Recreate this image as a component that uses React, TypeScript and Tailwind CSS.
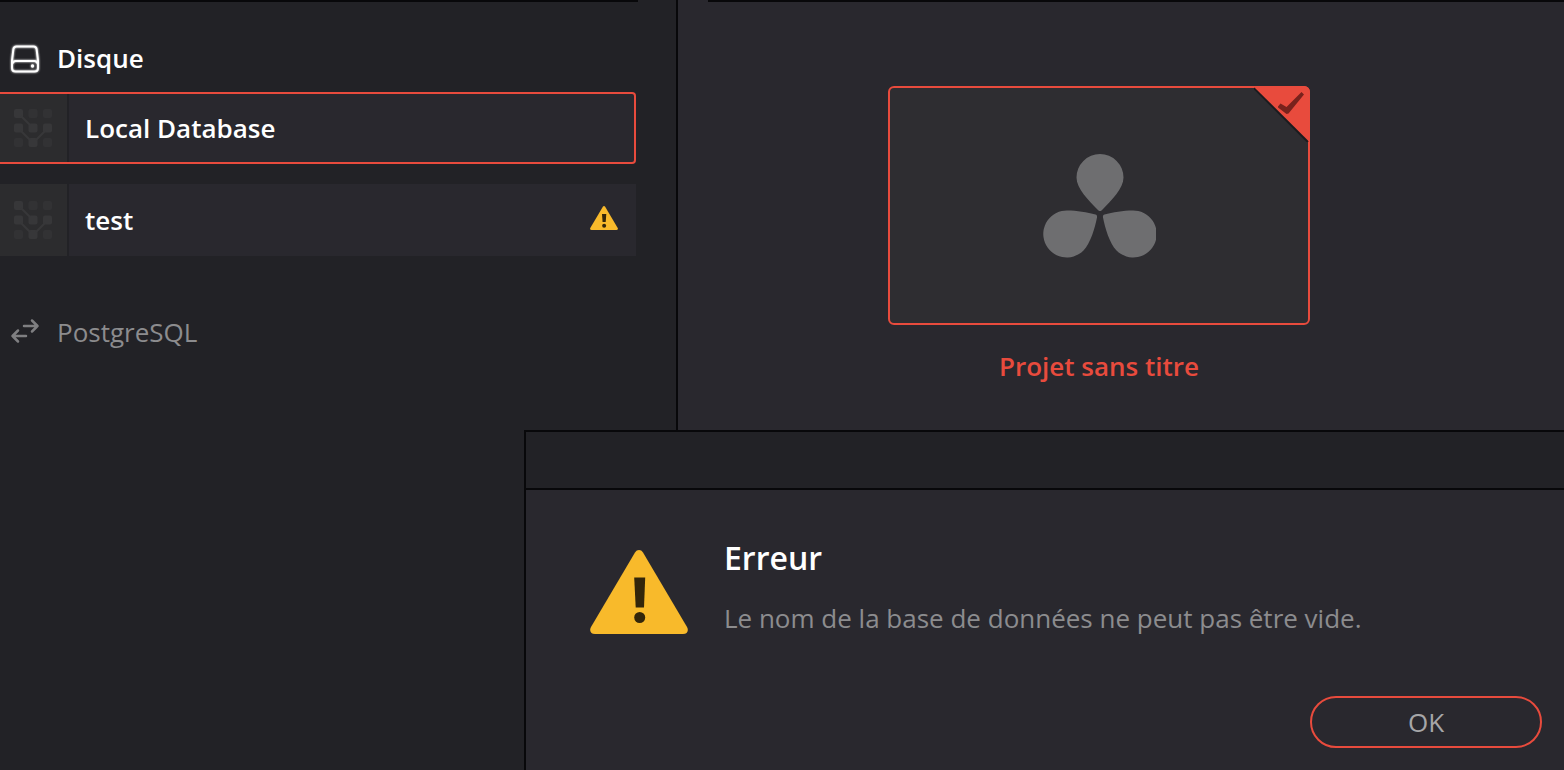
import clsx from "clsx";

const databases = [
  { name: "Local Database", selected: true, warning: false },
  { name: "test", selected: false, warning: true },
];

const DiskIcon: React.FC = () => (
  <svg
    viewBox="0 -2 30 30"
    className="size-[30px] drop-shadow-[0_0_1px_#ffffff]"
    fill="none"
    stroke="#ffffff"
    strokeWidth="2"
    aria-hidden="true"
  >
    <path d="M6.5 1.5h17c1.8 0 2.9 1 3.1 2.7L28 15.5v7.500c0 2-1.500 3.500-3.500 3.500h-19C3.500 26.500 2 25 2 23v-7.500L3.400 4.200C3.600 2.500 4.700 1.500 6.500 1.500z" />
    <path d="M2.500 18.500c.6-1.700 1.500-2.500 3-2.500h19c1.500 0 2.400.8 3 2.500" />
    <circle cx="22.500" cy="21" r="1.700" fill="#ffffff" stroke="none" />
  </svg>
);

const ArrowsIcon: React.FC = () => (
  <svg
    viewBox="0 0 30 28"
    className="w-[30px] h-7"
    fill="none"
    stroke="#7f7f81"
    strokeWidth="2.500"
    strokeLinecap="round"
    strokeLinejoin="round"
    aria-hidden="true"
  >
    <path d="M14 8H27.500M22 2.500l5.500 5.500-5.500 5.500" />
    <path d="M16 18H2.500M8 12.500L2.500 18l5.500 5.500" />
  </svg>
);

const DatabaseIcon: React.FC = () => (
  <svg viewBox="0 0 38 38" className="size-[38px]" aria-hidden="true">
    <g fill="#323234">
      <rect x="14.500" y="0" width="9" height="9" rx="2" />
      <rect x="29" y="0" width="9" height="9" rx="2" />
      <rect x="0" y="29" width="9" height="9" rx="2" />
      <rect x="29" y="29" width="9" height="9" rx="2" />
    </g>
    <g fill="#373739">
      <rect x="0" y="0" width="9" height="9" rx="2" />
      <rect x="0" y="14.500" width="9" height="9" rx="2" />
      <rect x="14.500" y="14.500" width="9" height="9" rx="2" />
      <rect x="29" y="14.500" width="9" height="9" rx="2" />
      <rect x="14.500" y="29" width="9" height="9" rx="2" />
    </g>
    <path
      d="M7 7l9 9M7 22l9 9M31 22l-9 9"
      stroke="#373739"
      strokeWidth="2"
      fill="none"
    />
  </svg>
);

const WarningIcon: React.FC<{ className?: string; bold?: boolean }> = ({
  className,
  bold,
}) => (
  <svg viewBox="0 0 98 84" className={className} aria-hidden="true">
    <path
      d="M45 2.500c2-3.300 6-3.300 8 0l44 74.500c2 3.500.3 7-4 7H5c-4.300 0-6-3.500-4-7z"
      fill="#f8ba2b"
    />
    {bold ? (
      <g fill="#33260a">
        <path d="M42 28h15l-2 28H44z" />
        <circle cx="49.500" cy="69" r="7" />
      </g>
    ) : (
      <g fill="#33260a">
        <path d="M44.200 27.500h11l-1.200 30h-8.300z" />
        <circle cx="49.700" cy="67.500" r="5.500" />
      </g>
    )}
  </svg>
);

const ResolveLogo: React.FC = () => (
  <svg
    viewBox="-1.5 0 114 104"
    className="w-[114px] h-[104px]"
    fill="#6e6e70"
    aria-hidden="true"
  >
    <path d="M56.500 57c-1 0-1.500-.5-2.300-1.300C45.500 46.500 33 35 33 23.500a23.500 23.500 0 0 1 47 0C80 35 67.500 46.500 58.800 55.700 58 56.500 57.500 57 56.500 57z" />
    <path d="M52 60.500c1.300.5 1.800 1.500 1.500 3-2 10-6.500 26-13.500 33A23.500 23.500 0 1 1 24 56.500c9 0 20 1.700 28 4z" />
    <path d="M61 60.500c-1.300.5-1.800 1.500-1.500 3 2 10 6.500 26 13.500 33A23.500 23.500 0 1 0 89 56.500c-9 0-20 1.700-28 4z" />
  </svg>
);

const SelectedCorner: React.FC = () => (
  <svg
    viewBox="0 0 56 56"
    className="absolute -top-0.5 -right-0.5 size-14"
    aria-hidden="true"
  >
    <path d="M0 2l54 54" stroke="#1b1b1e" strokeWidth="2" />
    <path d="M-1 0h51a6 6 0 0 1 6 6v49h-1.500z" fill="#e84b3d" />
    <path
      d="M24 20.500l2.500-3 6 3.500L47.500 6l2.500 2.500L34.500 27.500 32.500 28 24 21.500z"
      fill="#78221c"
    />
  </svg>
);

const Sidebar: React.FC = () => (
  <aside className="w-[678px] shrink-0 border-r-2 border-[#08080a] bg-[#222226]">
    <div className="h-0.5 mr-[38px] bg-[#08080a]" />
    <h2 className="flex items-center gap-[17px] h-9 mt-[38px] pl-2.5 font-semibold text-white">
      <DiskIcon />
      Disque
    </h2>
    <ul className="flex flex-col gap-5 mt-4 mr-10">
      {databases.map(({ name, selected, warning }) => (
        <li key={name}>
          <button
            type="button"
            className={clsx(
              "flex items-stretch w-full h-[72px] bg-[#29282e] text-left font-semibold text-white",
              selected && "rounded-r border-y-2 border-r-2 border-[#e84b3d]"
            )}
          >
            <span className="flex items-center justify-center w-[69px] pr-0.5 border-r-2 border-[#222226] bg-[#2c2c2e]">
              <DatabaseIcon />
            </span>
            <span className="flex-1 self-center pl-4">{name}</span>
            {warning && (
              <WarningIcon bold className="w-7 h-6 mr-[18px] mb-1 self-center" />
            )}
          </button>
        </li>
      ))}
    </ul>
    <h2 className="flex items-center gap-[17px] h-9 mt-[58px] pl-2.5 text-[#8c8c8e]">
      <ArrowsIcon />
      PostgreSQL
    </h2>
  </aside>
);

const Projects: React.FC = () => (
  <main className="flex-1 min-w-0 bg-[#29282e]">
    <div className="h-0.5 ml-[30px] bg-[#08080a]" />
    <div className="mt-[84px] pl-[210px]">
      <button
        type="button"
        className="flex flex-col items-center w-[422px] gap-[23px] font-semibold text-[#e84b3d]"
      >
        <span className="relative flex items-center justify-center w-full h-[239px] rounded-md border-2 border-[#e84b3d] bg-[#2e2d31]">
          <ResolveLogo />
          <SelectedCorner />
        </span>
        Projet sans titre
      </button>
    </div>
  </main>
);

const ErrorDialog: React.FC = () => (
  <div
    role="alertdialog"
    aria-labelledby="error-title"
    aria-describedby="error-text"
    className="absolute left-[524px] right-0 top-[430px] bottom-0 border-l-2 border-t-2 border-[#08080a] bg-[#29282e]"
  >
    <div className="h-[58px] border-b-2 border-[#08080a] bg-[#222226]" />
    <div className="flex gap-9 pt-12 pl-16">
      <WarningIcon className="w-[98px] h-[84px] mt-3" />
      <div>
        <h1
          id="error-title"
          className="text-[32px] leading-10 font-semibold text-white"
        >
          Erreur
        </h1>
        <p id="error-text" className="mt-[22px] text-[#8c8c8e]">
          Le nom de la base de données ne peut pas être vide.
        </p>
      </div>
    </div>
    <div className="flex justify-end mt-[60px] pr-[22px]">
      <button
        type="button"
        className="w-[232px] h-[52px] rounded-full border-2 border-[#e84b3d] text-[#a6a6a8]"
      >
        OK
      </button>
    </div>
  </div>
);

const App: React.FC = () => (
  <div className="relative flex min-h-screen overflow-hidden bg-[#222226] font-['Open_Sans',sans-serif] text-[26px] leading-9">
    <Sidebar />
    <Projects />
    <ErrorDialog />
  </div>
);

export default App;
